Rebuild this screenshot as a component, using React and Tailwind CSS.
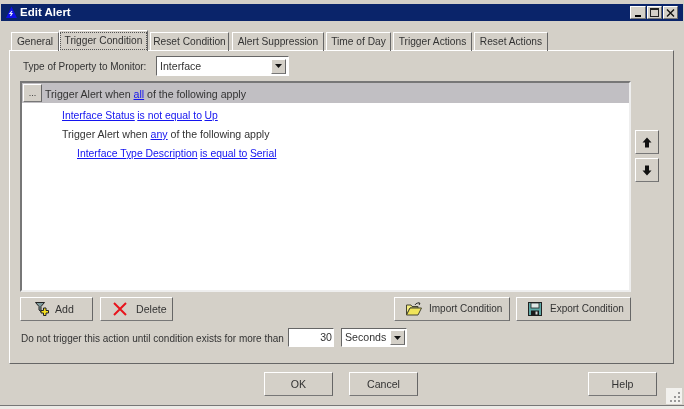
const FONT = "font-['Liberation_Sans',Arial,sans-serif]"

function Bevel({ className = '', children }) {
  return (
    <div className={`flex items-center justify-center border border-t-white border-l-white border-r-[#666] border-b-[#777] bg-[#d4d0c8] text-[#333] whitespace-nowrap ${className}`}>
      {children}
    </div>
  )
}

function Tab({ label, className = '' }) {
  return (
    <div className={`h-[19px] mt-[2px] flex items-center justify-center border-t border-l border-r border-t-white border-l-white border-r-[#666] text-[#333] text-[10.2px] whitespace-nowrap ${className}`}>
      {label}
    </div>
  )
}

function A({ children }) {
  return <span className="text-[#1414f0] underline">{children}</span>
}

function Arrow({ up }) {
  return (
    <svg width="10" height="11" viewBox="0 0 10 11">
      <path d={up ? 'M5 0.5 L9.5 5.5 L7 5.5 L7 10.5 L3 10.5 L3 5.5 L0.5 5.5 Z' : 'M5 10.5 L9.5 5.5 L7 5.5 L7 0.5 L3 0.5 L3 5.5 L0.5 5.5 Z'} fill="#111" />
    </svg>
  )
}

function DropArrow({ className = '' }) {
  return (
    <Bevel className={`w-[15px] h-[15px] shrink-0 ${className}`}>
      <svg width="7" height="4" viewBox="0 0 7 4"><path d="M0 0H7L3.5 4Z" fill="#111" /></svg>
    </Bevel>
  )
}

function FilterPlus() {
  return (
    <svg width="15" height="15" viewBox="0 0 15 15">
      <path d="M0.5 0.5H9.5L6 4.5V9.5L4 8V4.5Z" fill="#7f9a9c" stroke="#222" strokeWidth="1" />
      <path d="M8.5 6H11V8.5H13.5V11H11V13.5H8.5V11H6V8.5H8.5Z" fill="#f5e020" stroke="#222" strokeWidth="1" />
    </svg>
  )
}

function RedX() {
  return (
    <svg width="14" height="14" viewBox="0 0 14 14">
      <path d="M1 1 L13 13 M13 1 L1 13" stroke="#e8141c" strokeWidth="2" />
    </svg>
  )
}

function FolderOpen() {
  return (
    <svg width="16" height="14" viewBox="0 0 16 14">
      <path d="M0.5 3H5L6 4.5H12V6H4L0.5 13Z" fill="#f6ee80" stroke="#443" strokeWidth="1" />
      <path d="M0.5 13L4 6H15.5L12 13Z" fill="#f0e45a" stroke="#443" strokeWidth="1" />
      <path d="M9 3C10 1 12 0.5 14 1.5M14 1.5L12.5 0.5M14 1.5L13 3" stroke="#333" strokeWidth="1" fill="none" />
    </svg>
  )
}

function Floppy() {
  return (
    <svg width="14" height="14" viewBox="0 0 14 14">
      <rect x="0.5" y="0.5" width="13" height="13" fill="#5fa8a6" stroke="#222" strokeWidth="1" />
      <rect x="3" y="1" width="8" height="5" fill="#dfe8e6" stroke="#222" strokeWidth="0.8" />
      <rect x="3" y="8.5" width="8" height="5" fill="#1a1a1a" />
      <rect x="7.5" y="9.5" width="2" height="3" fill="#d8d8d8" />
    </svg>
  )
}

export default function App() {
  return (
    <div className={`${FONT} relative w-[684px] h-[409px] overflow-hidden bg-[#d4d0c8] text-[10.6px] leading-none pt-[4px] blur-[0.35px]`}>
      {/* title bar */}
      <div className="mx-[1px] h-[17px] bg-[#0a246a] flex items-center pl-[4px] pr-[5px]">
        <svg width="13" height="13" viewBox="0 0 13 13" className="shrink-0">
          <path d="M6.5 0.5 L12 12 H1 Z" fill="#1010e8" />
          <path d="M7 5 L5 7.5 H7 L5.5 10" stroke="#e4e9ff" strokeWidth="1.2" fill="none" />
        </svg>
        <span className="ml-[2px] font-bold text-white text-[11.5px]">Edit Alert</span>
        <div className="ml-auto flex items-center">
          <Bevel className="w-[16px] h-[13px] items-end pb-[1px]">
            <div className="w-[6px] h-[2px] bg-black" />
          </Bevel>
          <Bevel className="w-[15px] h-[13px] ml-[1px]">
            <div className="w-[9px] h-[9px] border border-t-2 border-[#222]" />
          </Bevel>
          <Bevel className="w-[15px] h-[13px] ml-[1px]">
            <svg width="9" height="8" viewBox="0 0 9 8"><path d="M1 0.5L8 7.5M8 0.5L1 7.5" stroke="#111" strokeWidth="1.4" /></svg>
          </Bevel>
        </div>
      </div>

      {/* tabs */}
      <div className="flex items-start pl-[11px] mt-[9px] h-[21px] relative z-10">
        <Tab label="General" className="w-[48px]" />
        <div className="w-[89px] h-[21px] flex items-center justify-center border-t border-l border-r border-t-white border-l-white border-r-[#666] bg-[#d4d0c8] text-[#333] text-[10.2px] whitespace-nowrap">
          <span className="outline outline-1 outline-dotted outline-[#555] py-[3px] w-[85px] text-center">Trigger Condition</span>
        </div>
        <Tab label="Reset Condition" className="w-[79px] ml-[2px]" />
        <Tab label="Alert Suppression" className="w-[92px] ml-[3px]" />
        <Tab label="Time of Day" className="w-[65px] ml-[2px]" />
        <Tab label="Trigger Actions" className="w-[79px] ml-[2px]" />
        <Tab label="Reset Actions" className="w-[74px] ml-[2px]" />
      </div>

      {/* panel */}
      <div className="ml-[9px] w-[665px] h-[314px] -mt-[1px] border border-t-white border-l-white border-r-[#666] border-b-[#666] pl-[10px] pt-[5px] text-[#333]">
        <div className="flex items-center h-[20px] pl-[3px]">
          <span className="w-[133px] pt-[1px] text-[10px] whitespace-nowrap">Type of Property to Monitor:</span>
          <div className="w-[133px] h-[20px] flex items-center justify-between bg-white border border-t-[#666] border-l-[#666] border-r-white border-b-white pl-[3px] pr-[2px]">
            <span>Interface</span>
            <DropArrow />
          </div>
        </div>

        <div className="flex items-start mt-[5px]">
          <div className="w-[611px] h-[211px] bg-white border-2 border-t-[#777] border-l-[#777] border-r-[#eee] border-b-[#eee] text-[#333]">
            <div className="h-[20px] bg-[#c1bfc3] flex items-center pl-[1px]">
              <Bevel className="w-[19px] h-[18px] shrink-0 text-[9px]">...</Bevel>
              <span className="ml-[3px] pt-[3px] whitespace-nowrap">Trigger Alert when <A>all</A> of the following apply</span>
            </div>
            <div className="pl-[40px] pt-[3px] flex flex-col">
              <div className="h-[19px] pt-[1px] flex items-center gap-[2.5px] text-[10.4px]"><A>Interface Status</A> <A>is not equal to</A> <A>Up</A></div>
              <div className="h-[19px] flex items-center"><span>Trigger Alert when <A>any</A> of the following apply</span></div>
              <div className="h-[19px] pt-[1px] flex items-center gap-[2.5px] pl-[15px] text-[10.4px]"><A>Interface Type Description</A> <A>is equal to</A> <A>Serial</A></div>
            </div>
          </div>
          <div className="ml-[4px] pt-[49px] flex flex-col gap-[4px]">
            <Bevel className="w-[24px] h-[24px]"><Arrow up /></Bevel>
            <Bevel className="w-[24px] h-[24px]"><Arrow /></Bevel>
          </div>
        </div>

        <div className="w-[611px] flex mt-[5px]">
          <Bevel className="w-[73px] h-[24px] justify-start pl-[14px] gap-[5px]"><FilterPlus /><span>Add</span></Bevel>
          <Bevel className="w-[73px] h-[24px] ml-[7px] justify-start pl-[12px] gap-[9px]"><RedX /><span>Delete</span></Bevel>
          <Bevel className="w-[116px] h-[24px] ml-auto justify-start pl-[11px] gap-[7px] text-[10px]"><FolderOpen /><span>Import Condition</span></Bevel>
          <Bevel className="w-[115px] h-[24px] ml-[6px] justify-start pl-[11px] gap-[8px] text-[10px]"><Floppy /><span>Export Condition</span></Bevel>
        </div>

        <div className="flex items-center mt-[7px] h-[19px]">
          <span className="w-[268px] pl-[1px] pt-[2px] text-[10px] whitespace-nowrap">Do not trigger this action until condition exists for more than</span>
          <div className="w-[46px] h-[19px] flex items-center justify-end bg-white border border-t-[#666] border-l-[#666] border-r-white border-b-white pr-[1px]">30</div>
          <div className="w-[66px] h-[19px] ml-[7px] flex items-center justify-between bg-white border border-t-[#666] border-l-[#666] border-r-white border-b-white pl-[3px] pr-[1px]">
            <span>Seconds</span>
            <DropArrow />
          </div>
        </div>
      </div>

      {/* dialog buttons */}
      <div className="flex mt-[8px] pl-[264px]">
        <Bevel className="w-[69px] h-[24px]">OK</Bevel>
        <Bevel className="w-[69px] h-[24px] ml-[16px]">Cancel</Bevel>
        <Bevel className="w-[69px] h-[24px] ml-[170px]">Help</Bevel>
      </div>

      {/* resize grip */}
      <div className="absolute left-[666px] top-[388px] w-[16px] h-[16px] bg-[#f2f1ee]">
        <svg width="16" height="16" viewBox="0 0 16 16">
          <path d="M12 4h2v2h-2zM8 8h2v2H8zM12 8h2v2h-2zM4 12h2v2H4zM8 12h2v2H8zM12 12h2v2h-2z" fill="#999" />
        </svg>
      </div>

      {/* window bottom edge */}
      <div className="absolute left-0 right-0 top-[405px] h-[1px] bg-[#777]" />
      <div className="absolute left-0 right-0 top-[406px] h-[3px] bg-[#ecebe7]" />
    </div>
  )
}
